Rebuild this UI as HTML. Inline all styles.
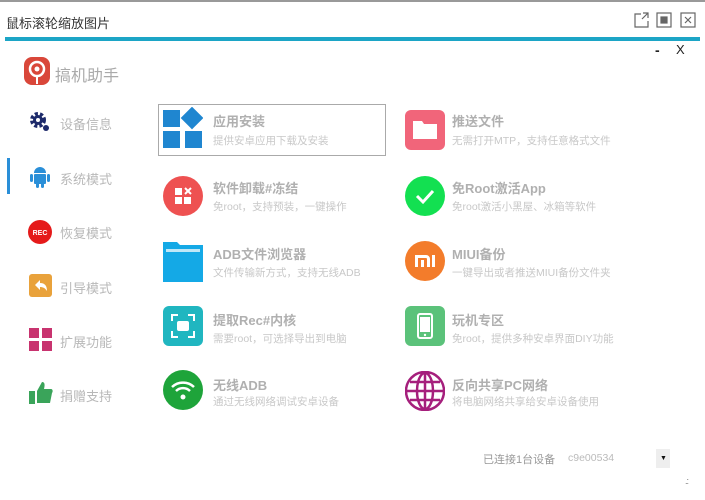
<!DOCTYPE html>
<html><head><meta charset="utf-8"><style>
body{margin:0;width:705px;height:500px;background:#fff;position:relative;overflow:hidden;font-family:"Liberation Sans","Noto Sans CJK SC",sans-serif}
.a{position:absolute}
.t{position:absolute;font-size:13px;color:#b0b0b0;font-weight:bold;white-space:nowrap}
.s{position:absolute;font-size:10.5px;color:#c8c8c8;white-space:nowrap}
.n{position:absolute;font-size:13px;color:#b8b8b8;white-space:nowrap}
</style></head><body>
<div class="a" style="left:0;top:0;width:705px;height:2px;background:#999"></div>
<div class="a" style="left:6px;top:13px;font-size:13px;color:#333">鼠标滚轮缩放图片</div>
<svg class="a" style="left:633px;top:11px" width="66" height="18" fill="none" stroke="#666" stroke-width="1.2">
<path d="M8 3H2v13h13v-6M10 2h5v5M15 2l-6 6"/><rect x="24" y="2" width="14" height="14"/><rect x="28" y="6" width="6" height="6" fill="#666"/><rect x="48" y="2" width="14" height="14"/><path d="M52 6l6 6M58 6l-6 6"/></svg>
<div class="a" style="left:5px;top:37px;width:695px;height:4px;background:#1ca5c6"></div>
<div class="a" style="left:655px;top:42px;font-size:14px;color:#222;font-weight:bold">-</div>
<div class="a" style="left:676px;top:42px;font-size:13px;color:#222">X</div>
<svg class="a" style="left:24px;top:57px" width="26" height="28"><rect x="0" y="0" width="26" height="28" rx="8" fill="#d9473a"/><circle cx="13" cy="12" r="7" fill="none" stroke="#fff" stroke-width="2.5"/><circle cx="13" cy="12" r="2.5" fill="#fff"/><path d="M13 19v8" stroke="#fff" stroke-width="2"/></svg>
<div class="a" style="left:55px;top:62px;font-size:16px;color:#aaa">搞机助手</div>

<div class="a" style="left:7px;top:158px;width:3px;height:36px;background:#2a8fd8"></div>
<svg class="a" style="left:29px;top:111px" width="22" height="22"><circle cx="9" cy="9" r="6" fill="none" stroke="#1d2a6a" stroke-width="4" stroke-dasharray="3 2"/><circle cx="9" cy="9" r="5" fill="#1d2a6a"/><circle cx="9" cy="9" r="2" fill="#fff"/><circle cx="17" cy="17" r="3" fill="#1d2a6a"/></svg>
<div class="n" style="left:60px;top:114px">设备信息</div>
<svg class="a" style="left:29px;top:165px" width="22" height="24" fill="#2a8fd8"><path d="M5 8a6 6 0 0 1 12 0z"/><rect x="5" y="9" width="12" height="10" rx="1"/><rect x="1" y="9" width="3" height="8" rx="1.5"/><rect x="18" y="9" width="3" height="8" rx="1.5"/><rect x="7" y="18" width="3" height="5" rx="1.5"/><rect x="12" y="18" width="3" height="5" rx="1.5"/></svg>
<div class="n" style="left:60px;top:169px">系统模式</div>
<svg class="a" style="left:28px;top:220px" width="24" height="24"><circle cx="12" cy="12" r="12" fill="#e51a1a"/><text x="12" y="15" font-size="7" fill="#fff" text-anchor="middle" font-family="Liberation Sans" font-weight="bold">REC</text></svg>
<div class="n" style="left:60px;top:223px">恢复模式</div>
<svg class="a" style="left:29px;top:274px" width="23" height="23"><rect width="23" height="23" rx="3" fill="#e9a23b"/><path d="M6 11l5-5v3c5 0 7 3 7 8-2-3-4-4-7-4v3z" fill="#fff"/></svg>
<div class="n" style="left:60px;top:278px">引导模式</div>
<svg class="a" style="left:29px;top:328px" width="23" height="23" fill="#c8336f"><rect width="10" height="10"/><rect x="13" width="10" height="10"/><rect y="13" width="10" height="10"/><rect x="13" y="13" width="10" height="10"/></svg>
<div class="n" style="left:60px;top:332px">扩展功能</div>
<svg class="a" style="left:29px;top:381px" width="24" height="24" fill="#3aa45a"><rect x="0" y="10" width="6" height="13"/><path d="M8 10l5-9c3 0 3 3 2 7h7c2 0 2 3 1 4l-2 10H8z"/></svg>
<div class="n" style="left:60px;top:386px">捐赠支持</div>

<div class="a" style="left:158px;top:104px;width:226px;height:50px;border:1px solid #aaa"></div>

<svg class="a" style="left:163px;top:107px" width="40" height="44" fill="#1f86d0"><rect x="0" y="3" width="17" height="17"/><rect x="21" y="3" width="16" height="16" transform="rotate(45 29 11)"/><rect x="0" y="24" width="17" height="17"/><rect x="22" y="24" width="17" height="17"/></svg>
<div class="t" style="left:213px;top:111px">应用安装</div><div class="s" style="left:213px;top:133px">提供安卓应用下载及安装</div>

<svg class="a" style="left:163px;top:176px" width="40" height="40"><circle cx="20" cy="20" r="20" fill="#ee5151"/><g fill="#fff"><rect x="12" y="12" width="7" height="7"/><rect x="12" y="21" width="7" height="7"/><rect x="21" y="21" width="7" height="7"/></g><path d="M22 12l6 6M28 12l-6 6" stroke="#fff" stroke-width="2"/></svg>
<div class="t" style="left:213px;top:178px">软件卸载#冻结</div><div class="s" style="left:213px;top:199px">免root，支持预装，一键操作</div>

<svg class="a" style="left:163px;top:240px" width="40" height="42"><path d="M0 2h14l3 3h23v37H0z" fill="#14a9e6"/><rect x="3" y="9" width="34" height="3" fill="#bfe7f7"/></svg>
<div class="t" style="left:213px;top:244px">ADB文件浏览器</div><div class="s" style="left:213px;top:265px">文件传输新方式，支持无线ADB</div>

<svg class="a" style="left:163px;top:306px" width="40" height="40"><rect width="40" height="40" rx="6" fill="#20b6c0"/><g stroke="#fff" stroke-width="2" fill="none"><path d="M9 15V9h6M25 9h6v6M31 25v6h-6M15 31H9v-6"/></g><rect x="14" y="15" width="12" height="10" rx="2" fill="#fff"/></svg>
<div class="t" style="left:213px;top:310px">提取Rec#内核</div><div class="s" style="left:213px;top:331px">需要root，可选择导出到电脑</div>

<svg class="a" style="left:163px;top:370px" width="40" height="40"><circle cx="20" cy="20" r="20" fill="#1ea43a"/><g stroke="#fff" stroke-width="2.5" fill="none"><path d="M9 17a16 16 0 0 1 22 0M13 21a10 10 0 0 1 14 0"/></g><circle cx="20" cy="27" r="2.5" fill="#fff"/></svg>
<div class="t" style="left:213px;top:375px">无线ADB</div><div class="s" style="left:213px;top:394px">通过无线网络调试安卓设备</div>

<svg class="a" style="left:405px;top:110px" width="40" height="40"><rect width="40" height="40" rx="6" fill="#f1657a"/><path d="M8 11h9l2 3h13v15H8z" fill="#fff"/></svg>
<div class="t" style="left:452px;top:111px">推送文件</div><div class="s" style="left:452px;top:133px">无需打开MTP，支持任意格式文件</div>

<svg class="a" style="left:405px;top:176px" width="40" height="40"><circle cx="20" cy="20" r="20" fill="#13e051"/><path d="M12 20l6 6 10-11" stroke="#fff" stroke-width="3" fill="none"/></svg>
<div class="t" style="left:452px;top:178px">免Root激活App</div><div class="s" style="left:452px;top:199px">免root激活小黑屋、冰箱等软件</div>

<svg class="a" style="left:405px;top:241px" width="40" height="40"><circle cx="20" cy="20" r="20" fill="#f37c2b"/><g fill="#fff"><path d="M10 14h11a4 4 0 0 1 4 4v8h-3v-8a1 1 0 0 0-1-1h-8v9h-3z"/><rect x="16" y="19" width="3" height="7"/><rect x="27" y="14" width="3" height="12"/></g></svg>
<div class="t" style="left:452px;top:244px">MIUI备份</div><div class="s" style="left:452px;top:265px">一键导出或者推送MIUI备份文件夹</div>

<svg class="a" style="left:405px;top:306px" width="40" height="40"><rect width="40" height="40" rx="6" fill="#5bc27a"/><rect x="13" y="8" width="14" height="24" rx="2" fill="none" stroke="#fff" stroke-width="2"/><rect x="15" y="11" width="10" height="15" fill="#fff"/><circle cx="20" cy="29" r="1.2" fill="#fff"/></svg>
<div class="t" style="left:452px;top:310px">玩机专区</div><div class="s" style="left:452px;top:331px">免root，提供多种安卓界面DIY功能</div>

<svg class="a" style="left:405px;top:371px" width="40" height="40"><circle cx="20" cy="20" r="19" fill="#fff" stroke="#a51f7c" stroke-width="2.5"/><g stroke="#a51f7c" stroke-width="2.5" fill="none"><ellipse cx="20" cy="20" rx="8" ry="18"/><path d="M20 2v36M2 20h36M5 11h30M5 29h30"/></g></svg>
<div class="t" style="left:452px;top:375px">反向共享PC网络</div><div class="s" style="left:452px;top:394px">将电脑网络共享给安卓设备使用</div>

<div class="a" style="left:483px;top:451px;font-size:11px;color:#999">已连接1台设备</div>
<div class="a" style="left:568px;top:452px;font-size:10.5px;color:#bbb">c9e00534</div>
<div class="a" style="left:656px;top:449px;width:14px;height:19px;background:#eee"></div>
<div class="a" style="left:660px;top:455px;font-size:7px;color:#111">▼</div>
<div class="a" style="left:685px;top:476px;font-size:9px;color:#777;letter-spacing:-1px">.:</div>
</body></html>
